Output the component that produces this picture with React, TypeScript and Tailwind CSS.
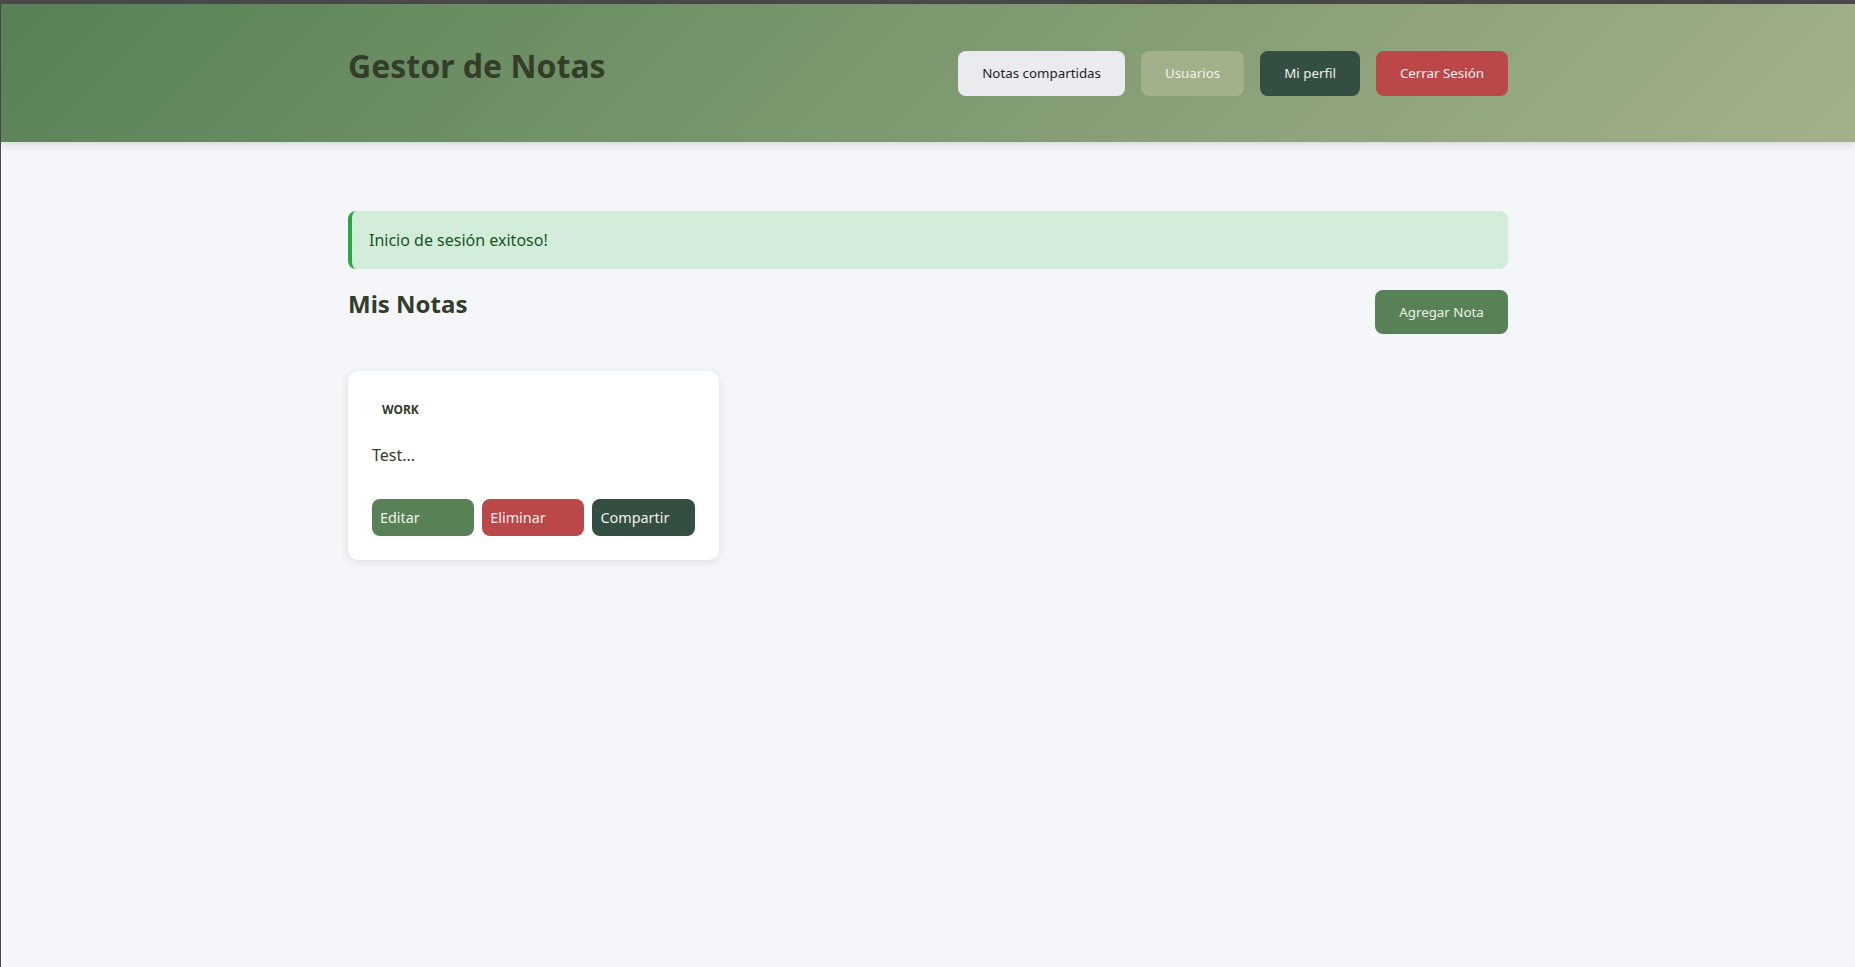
import React from "react";

export default function App() {
  return (
    <div
      className="min-h-[967px] w-full bg-[#f5f6fa] border-l border-[#4a4a4a] flex flex-col"
      style={{ fontFamily: '"Noto Sans", "Open Sans", sans-serif' }}
    >
      <div className="h-[4px] w-full bg-[#4b4b4b]" />
      <header className="h-[138px] w-full bg-[linear-gradient(135deg,#588157,#a3b18a)] shadow-[0_2px_10px_rgba(0,0,0,0.14)] flex items-center relative z-10">
        <div className="w-full max-w-[1200px] mx-auto px-5 flex items-center justify-between">
          <h1 className="text-[32px] leading-[48px] font-bold text-[#333d29] mb-[14px]">
            Gestor de Notas
          </h1>
          <nav className="flex items-center gap-4 text-[13.333px]">
            <button className="h-[45px] px-6 pt-[2px] rounded-lg bg-[#ebeaef] text-[#1f1f1f]">
              Notas compartidas
            </button>
            <button className="h-[45px] px-6 pt-[2px] rounded-lg bg-[#a3b18a] text-[#f1f1ea]">
              Usuarios
            </button>
            <button className="h-[45px] px-6 pt-[2px] rounded-lg bg-[#344e41] text-[#f1f1ea]">
              Mi perfil
            </button>
            <button className="h-[45px] px-6 pt-[2px] rounded-lg bg-[#bc4749] text-[#f8f0ee]">
              Cerrar Sesión
            </button>
          </nav>
        </div>
      </header>

      <main className="w-full max-w-[1200px] mx-auto px-5 pt-[69px]">
        <div className="h-[58px] flex items-center border-l-4 border-[#28a745] bg-[#d4edda] rounded-lg pl-[17px] text-[16px] text-[#155724]">
          Inicio de sesión exitoso!
        </div>

        <div className="mt-[21px] flex items-start justify-between">
          <h2 className="text-[24px] leading-8 font-bold text-[#333d29] -mt-[2px]">
            Mis Notas
          </h2>
          <button className="h-[44px] w-[133px] pt-[2px] rounded-lg bg-[#588157] text-[#eef2ea] text-[13.333px]">
            Agregar Nota
          </button>
        </div>

        <div className="mt-[37px] grid grid-cols-3 gap-6">
          <div className="bg-white rounded-[10px] shadow-[0_2px_10px_rgba(0,0,0,0.1)] px-6 pt-[25px] pb-6">
            <div className="h-[27px] flex items-center px-[10px]">
              <span className="text-[12px] font-bold text-[#333d29] uppercase">
                Work
              </span>
            </div>
            <p className="mt-[20px] text-[16px] leading-[25.6px] text-[#333d29]">
              Test...
            </p>
            <div className="mt-[30px] flex gap-2">
              <button className="flex-1 h-[37px] px-2 pt-[2px] rounded-lg bg-[#588157] text-[#f1f1ea] text-[14.4px] text-left">
                Editar
              </button>
              <button className="flex-1 h-[37px] px-2 pt-[2px] rounded-lg bg-[#bc4749] text-[#f8f0ee] text-[14.4px] text-left">
                Eliminar
              </button>
              <button className="flex-1 h-[37px] px-2 pt-[2px] rounded-lg bg-[#344e41] text-[#f1f1ea] text-[14.4px] text-left">
                Compartir
              </button>
            </div>
          </div>
        </div>
      </main>
    </div>
  );
}
